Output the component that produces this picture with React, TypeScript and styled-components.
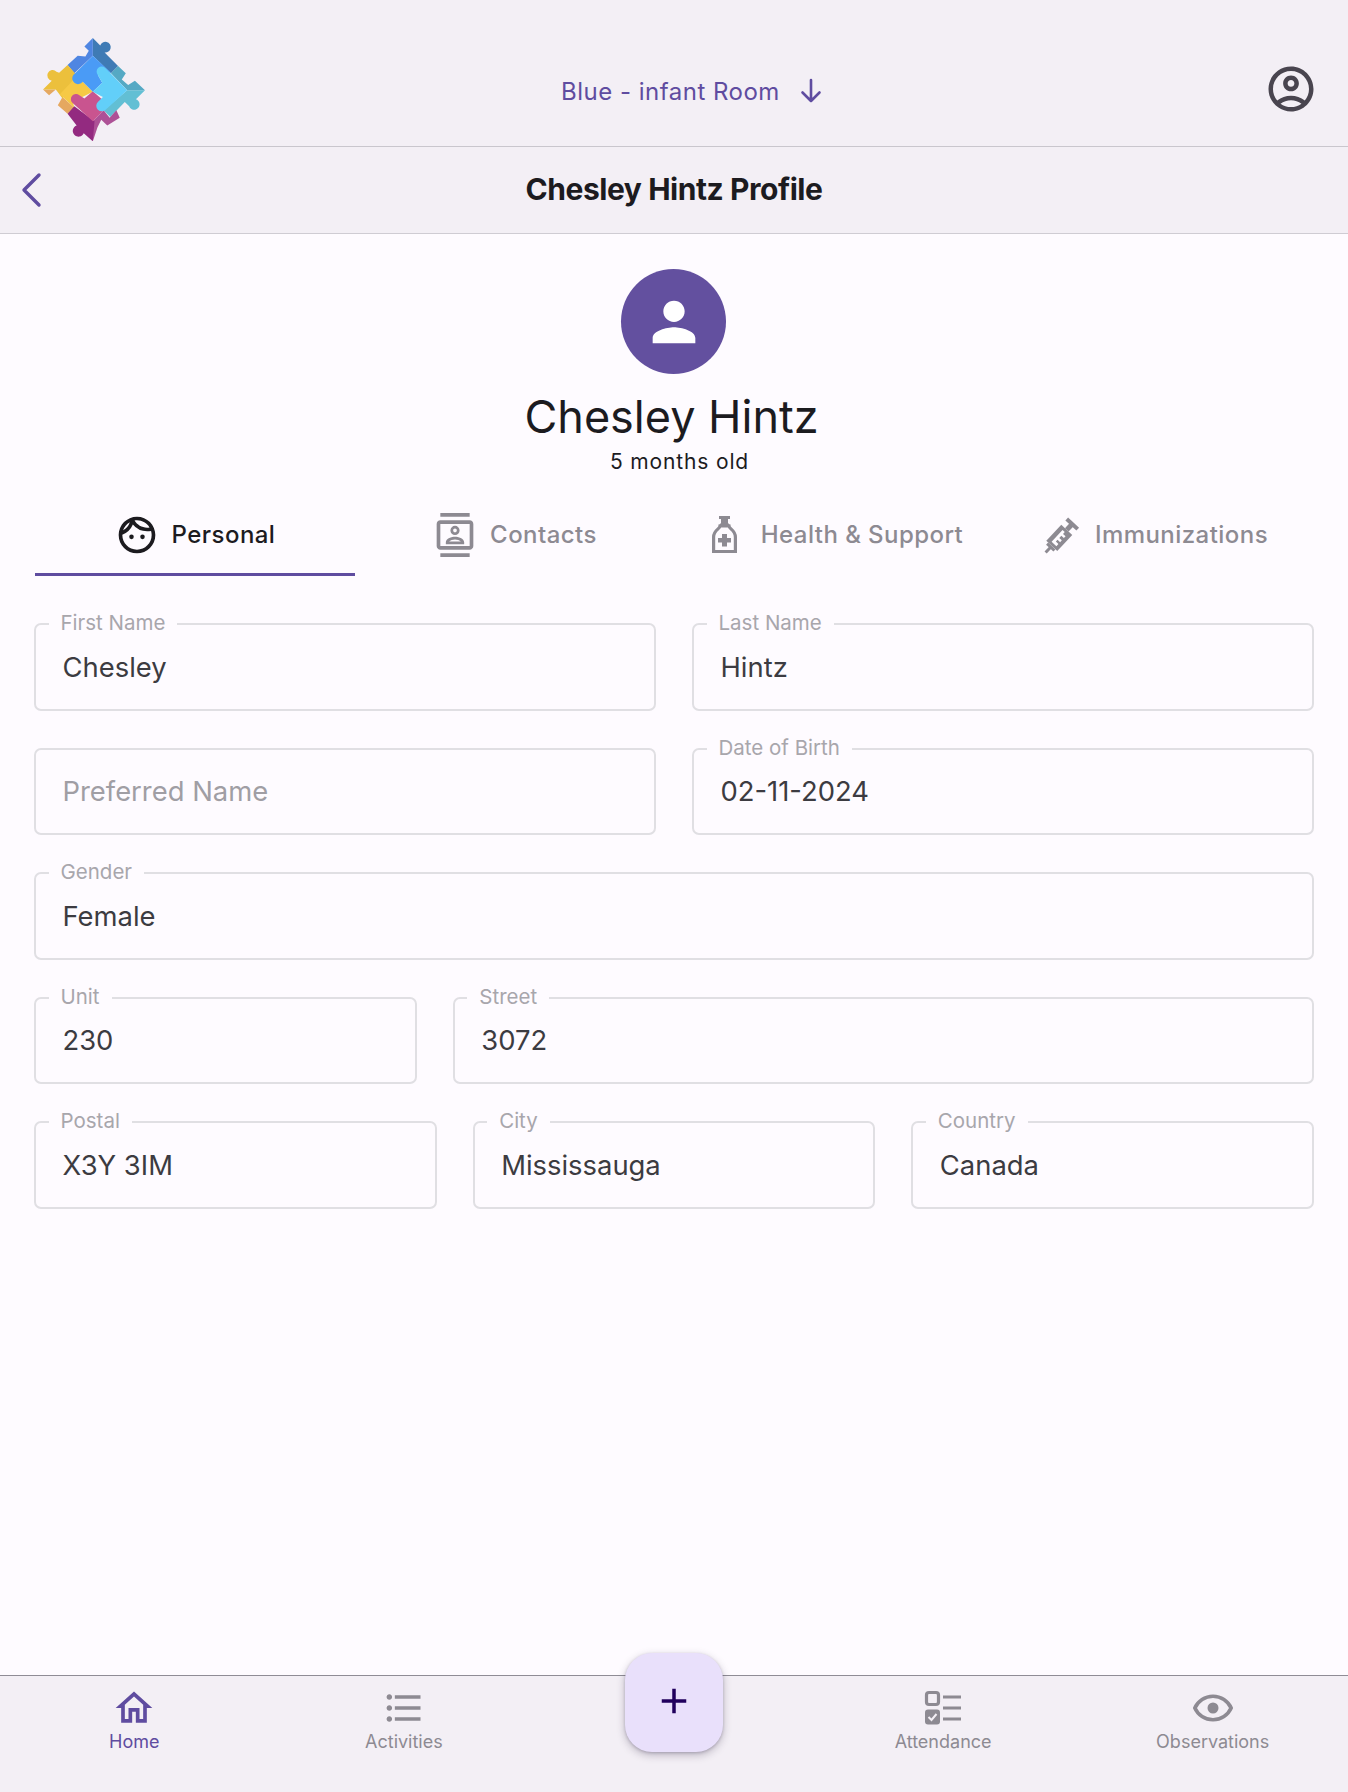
import React from 'react';
import styled, { createGlobalStyle } from 'styled-components';
import {
  MdOutlineAccountCircle,
  MdOutlineContacts,
  MdOutlineFace,
  MdOutlineHome,
  MdFormatListBulleted,
  MdPerson,
  MdAdd,
} from 'react-icons/md';

const GlobalStyle = createGlobalStyle`
  html, body {
    margin: 0;
    padding: 0;
    background: #fefbff;
    font-family: Inter, "Liberation Sans", sans-serif;
  }
  * {
    box-sizing: border-box;
  }
`;

const Page = styled.div`
  display: flex;
  flex-direction: column;
  width: 1348px;
  height: 1792px;
  overflow: hidden;
  background: #fefbff;
`;

const Header = styled.header`
  display: flex;
  align-items: center;
  flex: 0 0 147px;
  padding: 0 30px 0 43px;
  background: #f3eff5;
  border-bottom: 1px solid #c9c6cd;
  box-shadow: 0 1px 3px rgba(60, 50, 80, 0.2);
  position: relative;
`;

const Logo = styled.svg`
  width: 102px;
  height: 103px;
  margin-top: 32px;
  flex: none;
  filter: blur(0.5px);
`;

const Room = styled.div`
  display: flex;
  align-items: center;
  gap: 17px;
  margin-left: 416px;
  margin-top: 36px;
  color: #5f4ca0;
  font-size: 24px;
  letter-spacing: 0.5px;
`;

const UserButton = styled.div`
  margin-left: auto;
  margin-top: 32px;
  display: flex;
  color: #49454f;
`;

const TitleBar = styled.div`
  display: flex;
  align-items: center;
  justify-content: center;
  position: relative;
  flex: 0 0 87px;
  padding-bottom: 2px;
  background: #f3eff5;
  border-bottom: 1px solid #cfccd3;
`;

const Back = styled.svg`
  position: absolute;
  left: 20px;
  top: 24px;
`;

const Title = styled.h1`
  margin: 0;
  font-size: 30px;
  font-weight: 700;
  color: #1c1b1f;
  letter-spacing: -0.45px;
`;

const Content = styled.main`
  flex: 1;
  display: flex;
  flex-direction: column;
  padding: 35px 34px 0;
`;

const Hero = styled.section`
  display: flex;
  flex-direction: column;
  align-items: center;
  margin-left: -1px;
`;

const Avatar = styled.div`
  display: flex;
  align-items: center;
  justify-content: center;
  width: 105px;
  height: 105px;
  border-radius: 50%;
  background: #63509f;
  color: #fff;
`;

const Name = styled.div`
  margin-top: 15px;
  margin-left: -4px;
  font-size: 45px;
  line-height: 56px;
  color: #1c1b1f;
`;

const Age = styled.div`
  margin-top: 3px;
  margin-left: 12px;
  font-size: 21px;
  line-height: 28px;
  letter-spacing: 0.85px;
  color: #1c1b1f;
`;

const Tabs = styled.nav`
  display: grid;
  grid-template-columns: repeat(4, 320px);
  margin: 25px 0 0 1px;
`;

const Tab = styled.div<{ $active?: boolean }>`
  display: flex;
  align-items: center;
  justify-content: center;
  gap: 13px;
  height: 75px;
  padding-bottom: 5px;
  font-size: 24px;
  font-weight: 500;
  letter-spacing: 0.45px;
  color: ${(p) => (p.$active ? '#1c1b1f' : '#8d8a92')};
  border-bottom: 3px solid ${(p) => (p.$active ? '#5f4ca0' : 'transparent')};
`;

const Form = styled.form`
  display: flex;
  flex-direction: column;
  gap: 37px;
  margin-top: 47px;
`;

const Row = styled.div<{ $columns: string }>`
  display: grid;
  grid-template-columns: ${(p) => p.$columns};
  column-gap: 36px;
`;

const FieldBox = styled.div`
  position: relative;
  height: 87.5px;
  border: 2px solid #e0dfe3;
  border-radius: 7px;
`;

const FieldLabel = styled.label`
  position: absolute;
  left: 12.5px;
  top: -14px;
  padding: 0 12px;
  font-size: 20.5px;
  line-height: 24px;
  color: #a8a6ac;
  background: #fefbff;
`;

const FieldInput = styled.input`
  width: 100%;
  height: 100%;
  padding: 0 26.5px;
  border: 0;
  outline: 0;
  background: transparent;
  font-family: inherit;
  font-size: 27.4px;
  color: #3c3b41;
  &::placeholder {
    color: #a09ea4;
    opacity: 1;
  }
`;

const BottomNav = styled.footer`
  display: grid;
  grid-template-columns: repeat(5, 1fr);
  position: relative;
  flex: 0 0 117px;
  background: #f3eff5;
  border-top: 1.5px solid #8f8c95;
`;

const NavItem = styled.div<{ $active?: boolean }>`
  display: flex;
  flex-direction: column;
  align-items: center;
  padding: 10px 1px 0 0;
  color: ${(p) => (p.$active ? '#5f4ca0' : '#8d8a92')};
  font-size: 18px;
  span {
    line-height: 24px;
  }
`;

const Fab = styled.button`
  position: absolute;
  left: 625px;
  top: -23px;
  display: flex;
  align-items: center;
  justify-content: center;
  width: 98px;
  height: 99px;
  padding: 0 0 3px 0;
  border: 0;
  border-radius: 27px;
  background: #e9e0fb;
  color: #21005d;
  box-shadow: 0 3px 8px rgba(40, 30, 60, 0.28), 0 1px 3px rgba(40, 30, 60, 0.2);
`;

const PuzzleLogo = () => (
  <Logo viewBox="42 25 303 306">
    <path fill="#3f7bb5" d="M190 25 L212 47 A16 16 0 1 1 225 68 L265 108 L244 130 L190 78 Z" />
    <path fill="#4f86e2" d="M190 25 L165 50 L178 63 L168 80 L145 78 L115 105 L135 130 L190 78 Z" />
    <path fill="#55a9c4" d="M244 130 L265 108 L288 130 L276 148 L295 165 L315 152 L345 180 L292 180 Z" />
    <path fill="#62bfd4" d="M292 180 L345 180 L318 207 A16 16 0 1 1 298 228 L285 215 L242 260 L222 240 Z" />
    <path fill="#e5a860" d="M42 178 L60 195 L80 178 Z M100 200 L86 225 L115 250 L135 232 Z" />
    <path fill="#ecc03c" d="M42 178 L68 152 A16 16 0 1 1 82 125 L90 128 L115 105 L137 130 L132 150 L100 205 L80 178 Z" />
    <path fill="#f6c945" d="M132 150 L160 155 L190 185 L150 205 L128 202 L135 232 L92 192 Z" />
    <path fill="#ad5196" d="M190 272 L222 240 L240 262 L260 240 L270 262 L233 285 L215 268 L204 290 L190 332 Z" />
    <path fill="#932a80" d="M115 250 L135 228 L195 272 L190 332 L163 308 A17 17 0 1 1 142 285 Z" />
    <path fill="#c9548f" d="M130 218 A15 15 0 0 1 150 195 L165 205 L190 183 L218 208 L204 222 L222 240 L190 272 Z" />
    <path fill="#4a9bf6" d="M190 78 L244 128 L210 125 L205 135 L218 158 L190 185 L160 155 A16 16 0 0 1 132 135 Z" />
    <path fill="#62cff9" d="M205 135 A15 15 0 0 1 228 115 L292 180 L228 238 A15 15 0 1 1 205 215 L220 200 L190 185 L218 158 Z" />
  </Logo>
);

const BottleIcon = () => (
  <svg width="41" height="38" viewBox="0 0 41 38" fill="none">
    <g transform="translate(5 0)">
      <path fill="currentColor" d="M7 0h11v3h-2v4l2 2H7l2-2V3H7z" />
      <path stroke="currentColor" strokeWidth="3.200" d="M8 10h9c0 3 6.400 4 6.400 11v14.500H1.600V21C1.600 14 8 13 8 10z" />
      <path fill="currentColor" d="M10 18h5v4h4v4.500h-4v4h-5v-4H6V22h4z" />
    </g>
  </svg>
);

const SyringeIcon = () => (
  <svg width="40" height="38" viewBox="0 0 40 38">
    <g transform="translate(20 19) rotate(-47) translate(-24 0)" fill="currentColor">
      <rect x="0" y="-1.500" width="8" height="3" />
      <rect x="6" y="-5" width="3" height="10" />
      <rect x="9" y="-7.500" width="22" height="15" />
      <rect x="31" y="-2.500" width="7" height="5" />
      <rect x="37" y="-7.500" width="4" height="15" />
      <path fill="#fefbff" d="M12 -3h16v3h-2.500v3.500h-2.500V0h-3v3.500h-2.500V0H15v3.500h-3z" />
    </g>
  </svg>
);

const AttendanceIcon = () => (
  <svg width="44" height="44" viewBox="0 0 44 44">
    <g transform="translate(4 5)">
      <rect x="1.500" y="1.500" width="12" height="12" rx="2.500" fill="none" stroke="currentColor" strokeWidth="3.200" />
      <rect x="0" y="18.500" width="15" height="15" rx="3" fill="currentColor" />
      <path d="M3.500 26l3 3 5-6" fill="none" stroke="#f3eff5" strokeWidth="2" />
      <path d="M18 6h18M18 17h18M18 28h18" stroke="currentColor" strokeWidth="2.800" />
    </g>
  </svg>
);

const EyeIcon = () => (
  <svg width="44" height="44" viewBox="0 0 24 24" fill="none">
    <path
      d="M12 5.600c-4.400 0-8.200 2.600-9.900 6.400 1.700 3.800 5.500 6.400 9.900 6.400s8.200-2.600 9.900-6.400C20.200 8.200 16.400 5.600 12 5.600z"
      stroke="currentColor"
      strokeWidth="2"
    />
    <circle cx="12" cy="12" r="3" fill="currentColor" />
  </svg>
);

const ChevronBack = () => (
  <Back width="24" height="38" viewBox="0 0 24 38" fill="none">
    <path d="M19 4L4 19l15 15" stroke="#5f4ca0" strokeWidth="3.400" strokeLinecap="round" strokeLinejoin="round" />
  </Back>
);

const ArrowDown = () => (
  <svg width="28" height="28" viewBox="0 0 28 28" fill="none">
    <path d="M14 3v21M5.500 15.500L14 24l8.500-8.500" stroke="currentColor" strokeWidth="2.600" strokeLinecap="round" strokeLinejoin="round" />
  </svg>
);

type FieldData = { label?: string; value?: string; placeholder?: string };

const Field = ({ label, value, placeholder }: FieldData) => (
  <FieldBox>
    {label && <FieldLabel>{label}</FieldLabel>}
    <FieldInput readOnly value={value ?? ''} placeholder={placeholder} />
  </FieldBox>
);

const rows: { columns: string; fields: FieldData[] }[] = [
  {
    columns: '1fr 1fr',
    fields: [
      { label: 'First Name', value: 'Chesley' },
      { label: 'Last Name', value: 'Hintz' },
    ],
  },
  {
    columns: '1fr 1fr',
    fields: [
      { placeholder: 'Preferred Name' },
      { label: 'Date of Birth', value: '02-11-2024' },
    ],
  },
  { columns: '1fr', fields: [{ label: 'Gender', value: 'Female' }] },
  {
    columns: '4fr 9fr',
    fields: [
      { label: 'Unit', value: '230' },
      { label: 'Street', value: '3072' },
    ],
  },
  {
    columns: '1fr 1fr 1fr',
    fields: [
      { label: 'Postal', value: 'X3Y 3IM' },
      { label: 'City', value: 'Mississauga' },
      { label: 'Country', value: 'Canada' },
    ],
  },
];

export default function App() {
  return (
    <Page>
      <GlobalStyle />
      <Header>
        <PuzzleLogo />
        <Room>
          Blue - infant Room
          <ArrowDown />
        </Room>
        <UserButton>
          <MdOutlineAccountCircle size={54} />
        </UserButton>
      </Header>
      <TitleBar>
        <ChevronBack />
        <Title>Chesley Hintz Profile</Title>
      </TitleBar>
      <Content>
        <Hero>
          <Avatar>
            <MdPerson size={64} />
          </Avatar>
          <Name>Chesley Hintz</Name>
          <Age>5 months old</Age>
        </Hero>
        <Tabs>
          <Tab $active>
            <MdOutlineFace size={44} />
            Personal
          </Tab>
          <Tab>
            <MdOutlineContacts size={44} />
            Contacts
          </Tab>
          <Tab>
            <BottleIcon />
            Health &amp; Support
          </Tab>
          <Tab>
            <SyringeIcon />
            Immunizations
          </Tab>
        </Tabs>
        <Form>
          {rows.map((row, index) => (
            <Row key={index} $columns={row.columns}>
              {row.fields.map((field, i) => (
                <Field key={i} {...field} />
              ))}
            </Row>
          ))}
        </Form>
      </Content>
      <BottomNav>
        <NavItem $active>
          <MdOutlineHome size={44} />
          <span>Home</span>
        </NavItem>
        <NavItem>
          <MdFormatListBulleted size={44} />
          <span>Activities</span>
        </NavItem>
        <div />
        <NavItem>
          <AttendanceIcon />
          <span>Attendance</span>
        </NavItem>
        <NavItem>
          <EyeIcon />
          <span>Observations</span>
        </NavItem>
        <Fab type="button" aria-label="Add">
          <MdAdd size={42} />
        </Fab>
      </BottomNav>
    </Page>
  );
}
